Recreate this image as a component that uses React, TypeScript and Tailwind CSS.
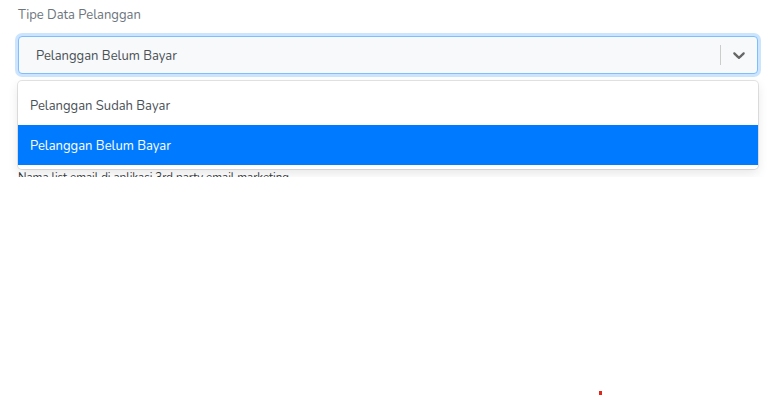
const options = [
  { value: "paid", label: "Pelanggan Sudah Bayar" },
  { value: "unpaid", label: "Pelanggan Belum Bayar" },
];

function ChevronDown() {
  return (
    <svg viewBox="0 0 20 20" className="h-5 w-5 fill-[#666666]" aria-hidden="true">
      <path d="M4.516 7.548c0.436-0.446 1.043-0.481 1.576 0l3.908 3.747 3.908-3.747c0.533-0.481 1.141-0.446 1.574 0 0.436 0.445 0.408 1.197 0 1.615-0.406 0.418-4.695 4.502-4.695 4.502-0.217 0.223-0.502 0.335-0.787 0.335s-0.57-0.112-0.789-0.335c0 0-4.287-4.084-4.695-4.502s-0.436-1.17 0-1.615z" />
    </svg>
  );
}

export default function App() {
  const selected = "unpaid";
  const current = options.find((o) => o.value === selected);

  return (
    <div className="relative h-[396px] w-[775px] bg-white font-['Nunito','Open_Sans',sans-serif]">
      <div className="h-[177px] overflow-hidden px-[18px] pt-[5px]">
        <label className="block text-[13px] leading-[20px] text-[#6c757d]">Tipe Data Pelanggan</label>

        <div className="relative mt-[11px] w-[740px]">
          {/* control */}
          <div className="flex h-[38px] items-center rounded-[4px] border border-[#80bdff] bg-[#f8f9fa] shadow-[0_0_0_3px_rgba(0,123,255,0.2)]">
            <div className="flex-1 pl-[17px] pt-[3px] text-[13px] text-[#495057]">{current?.label}</div>
            <span className="h-[20px] w-px bg-[#cccccc]" />
            <div className="flex items-center px-2">
              <ChevronDown />
            </div>
          </div>

          {/* menu */}
          <div className="absolute left-0 right-0 top-[45px] z-10 rounded-[4px] bg-white py-1 shadow-[0_0_0_1px_rgba(0,0,0,0.1),0_4px_11px_rgba(0,0,0,0.1)]">
            {options.map((o) => (
              <div
                key={o.value}
                className={
                  o.value === selected
                    ? "flex h-[40px] items-center bg-[#007bff] px-3 pt-[3px] text-[13px] text-white"
                    : "flex h-[40px] items-center px-3 pt-[3px] text-[13px] text-[#495057]"
                }
              >
                {o.label}
              </div>
            ))}
          </div>

          <p className="mt-[94px] text-[11.5px] leading-[18px] text-[#343a40]">
            Nama list email di aplikasi 3rd party email marketing
          </p>
        </div>
      </div>

      <span className="absolute left-[599px] top-[391px] h-[4px] w-[3px] bg-[#e3261c]" />
    </div>
  );
}
